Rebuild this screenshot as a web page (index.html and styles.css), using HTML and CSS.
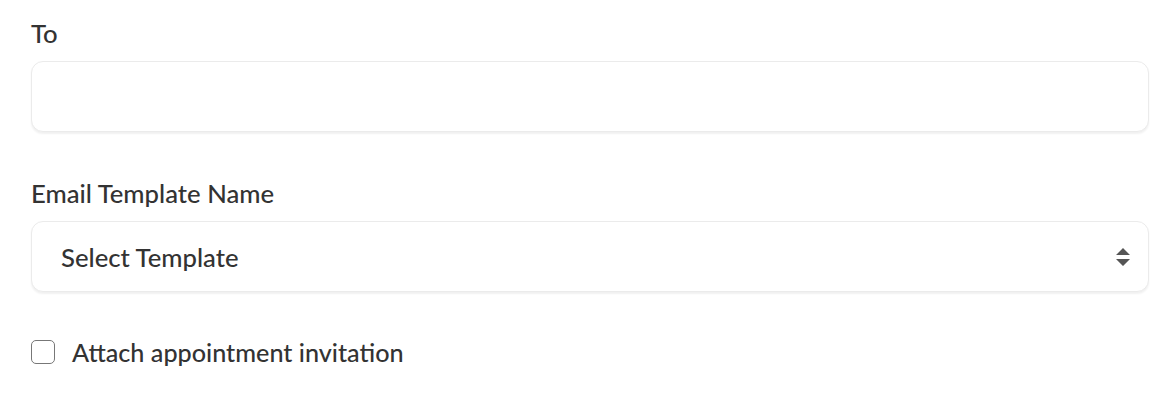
FILE: index.html
```html
<!DOCTYPE html>
<html>
<head>
<meta charset="utf-8">
<link rel="stylesheet" href="styles.css">
</head>
<body>
<form class="form">
  <div class="field">
    <label class="label" for="to">To</label>
    <input class="control" id="to" type="text">
  </div>
  <div class="field">
    <label class="label" for="tpl">Email Template Name</label>
    <div class="select">
      <span class="select-text">Select Template</span>
      <svg class="arrows" width="14" height="20" viewBox="0 0 14 20"><path d="M7 1 L14 8 L0 8 Z M0 12 L14 12 L7 19 Z" fill="#555"/></svg>
    </div>
  </div>
  <label class="check">
    <span class="box"></span>
    <span class="check-text">Attach appointment invitation</span>
  </label>
</form>
</body>
</html>
```
FILE: styles.css
```css
html, body { margin: 0; padding: 0; background: #fff; }
body { font-family: Lato, "Open Sans", sans-serif; color: #333; }
.form { padding: 18px 27px 0 31px; display: flex; flex-direction: column; }
.field { display: flex; flex-direction: column; }
.label { font-size: 25.7px; line-height: 30px; height: 30px; margin-bottom: 13px; color: #333; font-weight: 500; }
.field + .field { margin-top: 46px; }
.control, .select {
  box-sizing: border-box; height: 71px; border: 1.5px solid #ebebeb; border-radius: 12px;
  box-shadow: 0 2px 2px rgba(0,0,0,0.06); background: #fff; width: 100%;
}
.control { font: inherit; outline: none; }
.select { display: flex; align-items: center; justify-content: space-between; padding: 0 18px 0 29px; }
.select-text { font-size: 25.7px; color: #333; font-weight: 500; }
.arrows { display: block; }
.check { display: flex; align-items: center; margin-top: 45px; gap: 17px; height: 30px; }
.box { width: 24px; height: 24px; border: 1.5px solid #777; border-radius: 5px; box-sizing: border-box; }
.check-text { font-size: 25.2px; color: #333; font-weight: 500; line-height: 30px; }
```
